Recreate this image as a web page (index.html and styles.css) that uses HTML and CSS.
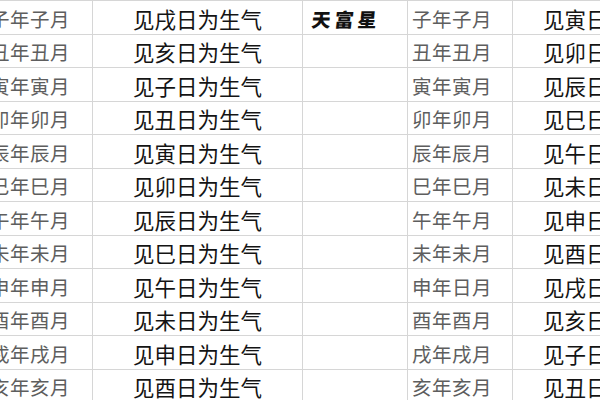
FILE: index.html
```html
<!DOCTYPE html>
<html lang="zh-CN">
<head>
<meta charset="utf-8">
<title>天富星</title>
<link rel="stylesheet" href="styles.css">
</head>
<body>
<div class="sheet">
  <div class="cell c1">子年子月</div><div class="cell c2">见戌日为生气</div><div class="cell c3"><span class="star">天富星</span></div><div class="cell c4">子年子月</div><div class="cell c5">见寅日为生气</div>
  <div class="cell c1">丑年丑月</div><div class="cell c2">见亥日为生气</div><div class="cell c3"></div><div class="cell c4">丑年丑月</div><div class="cell c5">见卯日为生气</div>
  <div class="cell c1">寅年寅月</div><div class="cell c2">见子日为生气</div><div class="cell c3"></div><div class="cell c4">寅年寅月</div><div class="cell c5">见辰日为生气</div>
  <div class="cell c1">卯年卯月</div><div class="cell c2">见丑日为生气</div><div class="cell c3"></div><div class="cell c4">卯年卯月</div><div class="cell c5">见巳日为生气</div>
  <div class="cell c1">辰年辰月</div><div class="cell c2">见寅日为生气</div><div class="cell c3"></div><div class="cell c4">辰年辰月</div><div class="cell c5">见午日为生气</div>
  <div class="cell c1">巳年巳月</div><div class="cell c2">见卯日为生气</div><div class="cell c3"></div><div class="cell c4">巳年巳月</div><div class="cell c5">见未日为生气</div>
  <div class="cell c1">午年午月</div><div class="cell c2">见辰日为生气</div><div class="cell c3"></div><div class="cell c4">午年午月</div><div class="cell c5">见申日为生气</div>
  <div class="cell c1">未年未月</div><div class="cell c2">见巳日为生气</div><div class="cell c3"></div><div class="cell c4">未年未月</div><div class="cell c5">见酉日为生气</div>
  <div class="cell c1">申年申月</div><div class="cell c2">见午日为生气</div><div class="cell c3"></div><div class="cell c4">申年日月</div><div class="cell c5">见戌日为生气</div>
  <div class="cell c1">酉年酉月</div><div class="cell c2">见未日为生气</div><div class="cell c3"></div><div class="cell c4">酉年酉月</div><div class="cell c5">见亥日为生气</div>
  <div class="cell c1">戌年戌月</div><div class="cell c2">见申日为生气</div><div class="cell c3"></div><div class="cell c4">戌年戌月</div><div class="cell c5">见子日为生气</div>
  <div class="cell c1">亥年亥月</div><div class="cell c2">见酉日为生气</div><div class="cell c3"></div><div class="cell c4">亥年亥月</div><div class="cell c5">见丑日为生气</div>
</div>
</body>
</html>
```

FILE: styles.css
```css
html, body {
  margin: 0;
  padding: 0;
  background: #ffffff;
  overflow: hidden;
  width: 600px;
  height: 400px;
}

.sheet {
  display: grid;
  grid-template-columns: 107px 210px 105px 105px 220px;
  grid-auto-rows: 33.5px;
  margin-left: -14px;
  border-top: 1px solid #d6d6d6;
  font-family: "Noto Sans CJK SC", "Noto Sans", sans-serif;
  width: 747px;
}

.cell {
  box-sizing: border-box;
  border-right: 1px solid #d6d6d6;
  border-bottom: 1px solid #d6d6d6;
  display: flex;
  align-items: center;
  padding-top: 2px;
  white-space: nowrap;
  overflow: hidden;
}

.c1, .c4 {
  font-size: 19.5px;
  color: #5e5e5e;
  padding-left: 4px;
  letter-spacing: 0.5px;
}

.c2 {
  font-size: 21.5px;
  color: #141414;
  justify-content: center;
}

.c5 {
  font-size: 21.5px;
  color: #141414;
  padding-left: 30px;
}

.star {
  font-size: 19px;
  font-weight: 900;
  color: #111111;
  letter-spacing: 4px;
  padding-left: 9px;
  transform: skewX(-6deg);
  display: inline-block;
}
```
